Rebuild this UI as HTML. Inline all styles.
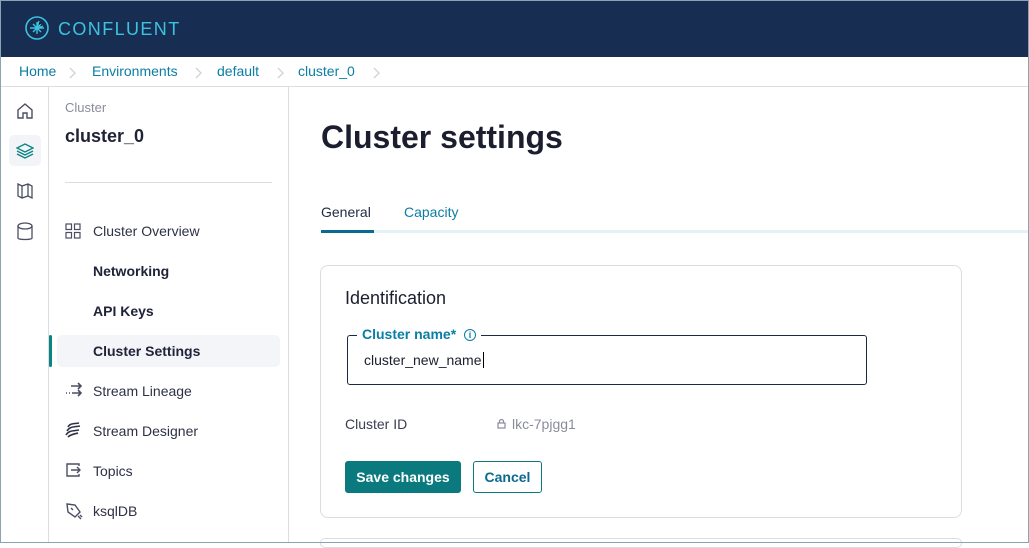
<!DOCTYPE html>
<html><head><style>
*{box-sizing:border-box;margin:0;padding:0}
body{width:1029px;height:543px;overflow:hidden;font-family:"Liberation Sans",sans-serif;background:#fff;position:relative;color:#1f2335}
.frame{position:absolute;inset:0;border:1px solid #8aa4b4;pointer-events:none;z-index:10}
.hdr{position:absolute;left:0;top:0;width:1029px;height:57px;background:#172d52}
.logo{position:absolute;left:25px;top:16px}
.logotxt{position:absolute;left:58px;top:19px;color:#3cc3e0;font-size:18px;letter-spacing:1.4px}
.bc{position:absolute;left:0;top:57px;width:1029px;height:30px;border-bottom:1px solid #dcdde3;font-size:14px;color:#0a7ea4}
.bc span{position:absolute;top:6px}
.bc svg{position:absolute;top:10px}
.rail{position:absolute;left:0;top:87px;width:49px;height:456px;border-right:1px solid #dcdde3}
.side{position:absolute;left:49px;top:87px;width:240px;height:456px;border-right:1px solid #dcdde3}
.side .it{position:absolute;left:44px;font-size:14px;color:#2e3145}
.side .b{font-weight:bold;color:#20233a}
.ic{position:absolute;left:16px}
h1{position:absolute;left:321px;top:119px;font-size:32px;font-weight:bold;color:#1b1e2e}
.tab{position:absolute;top:204px;font-size:14px}
.card{position:absolute;left:320px;top:265px;width:642px;height:253px;border:1px solid #dcdde3;border-radius:8px}
</style></head><body>
<div class="hdr">
<svg class="logo" width="24" height="24" viewBox="0 0 24 24"><circle cx="12" cy="12" r="11" fill="none" stroke="#3cc3e0" stroke-width="1.6"/><g stroke="#3cc3e0" stroke-width="1.4"><path d="M5 12H19M12 6V18M8 8L16 16M8 16L16 8M14 5L12 12L18 10"/></g></svg>
<div class="logotxt">CONFLUENT</div>
</div>
<div class="bc">
<span style="left:19px">Home</span><svg style="left:68px" width="8" height="12" viewBox="0 0 8 12"><path d="M2 1L7 6L2 11" fill="none" stroke="#d0d2d8" stroke-width="1.3"/></svg>
<span style="left:92px">Environments</span><svg style="left:194px" width="8" height="12" viewBox="0 0 8 12"><path d="M2 1L7 6L2 11" fill="none" stroke="#d0d2d8" stroke-width="1.3"/></svg>
<span style="left:217px">default</span><svg style="left:276px" width="8" height="12" viewBox="0 0 8 12"><path d="M2 1L7 6L2 11" fill="none" stroke="#d0d2d8" stroke-width="1.3"/></svg>
<span style="left:298px">cluster_0</span><svg style="left:372px" width="8" height="12" viewBox="0 0 8 12"><path d="M2 1L7 6L2 11" fill="none" stroke="#d0d2d8" stroke-width="1.3"/></svg>
</div>
<div class="rail">
<svg style="position:absolute;left:16px;top:15px" width="18" height="18" viewBox="0 0 18 18" fill="none" stroke="#4b4e63" stroke-width="1.4"><path d="M2 8L9 2L16 8V16H11V11H7V16H2Z"/></svg>
<div style="position:absolute;left:9px;top:48px;width:32px;height:31px;background:#f3f4f7;border-radius:5px"></div>
<svg style="position:absolute;left:16px;top:55px" width="18" height="18" viewBox="0 0 18 18" fill="none" stroke="#0b8484" stroke-width="1.3"><path d="M9 2L17 6L9 10L1 6Z M1 9L9 13L17 9 M1 12L9 16L17 12"/></svg>
<svg style="position:absolute;left:17px;top:96px" width="16" height="16" viewBox="0 0 16 16" fill="none" stroke="#4b4e63" stroke-width="1.3"><path d="M1 1L5 3L11 1L15 3V15L11 13L5 15L1 13Z M5 3V15 M11 1V13"/></svg>
<svg style="position:absolute;left:17px;top:135px" width="16" height="20" viewBox="0 0 16 20" fill="none" stroke="#4b4e63" stroke-width="1.3"><ellipse cx="8" cy="4" rx="7" ry="3"/><path d="M1 4V16C1 18 15 18 15 16V4"/></svg>
</div>
<div class="side">
<div style="position:absolute;left:16px;top:13px;font-size:13px;color:#8a8c9c">Cluster</div>
<div style="position:absolute;left:16px;top:39px;font-size:18px;font-weight:bold;color:#1f2335">cluster_0</div>
<div style="position:absolute;left:16px;top:95px;width:207px;border-top:1px solid #dcdde3"></div>
<svg class="ic" style="top:136px" width="16" height="16" viewBox="0 0 16 16" fill="none" stroke="#4b4e63" stroke-width="1.2"><rect x="1" y="1" width="5.5" height="5.5"/><rect x="9.5" y="1" width="5.5" height="5.5"/><rect x="1" y="9.5" width="5.5" height="5.5"/><rect x="9.5" y="9.5" width="5.5" height="5.5"/></svg>
<div class="it" style="top:136px">Cluster Overview</div>
<div class="it b" style="top:176px">Networking</div>
<div class="it b" style="top:216px">API Keys</div>
<div style="position:absolute;left:0;top:248px;width:3px;height:32px;background:#0b8484;border-radius:2px"></div>
<div style="position:absolute;left:8px;top:248px;width:223px;height:32px;background:#f4f5f8;border-radius:5px"></div>
<div class="it b" style="top:256px">Cluster Settings</div>
<svg class="ic" style="top:295px" width="18" height="16" viewBox="0 0 18 16" fill="none" stroke="#4b4e63" stroke-width="1.6"><path d="M6 4H16M13 1L16 4L13 7M1 11H2M4 11H5M7 11H16M13 8L16 11L13 14"/></svg>
<div class="it" style="top:296px">Stream Lineage</div>
<svg class="ic" style="top:335px" width="16" height="16" viewBox="0 0 16 16" fill="none" stroke="#2e3145" stroke-width="1.6"><path d="M3 5C5 1 9 2 14 1M2 9C5 4 10 5 15 4M1 13C4 8 9 9 14 8M3 15C6 12 10 12 13 11"/></svg>
<div class="it" style="top:336px">Stream Designer</div>
<svg class="ic" style="top:375px" width="16" height="16" viewBox="0 0 16 16" fill="none" stroke="#4b4e63" stroke-width="1.4"><path d="M14 4V2H2V14H14V12M6 8H15M12 5L15 8L12 11"/></svg>
<div class="it" style="top:376px">Topics</div>
<svg class="ic" style="top:415px" width="18" height="18" viewBox="0 0 18 18" fill="none" stroke="#4b4e63" stroke-width="1.4"><path d="M2 2L10 3L15 10L10 15L3 10Z M6 6L8 8 M13 14L16 17 M15 13L17 15"/></svg>
<div class="it" style="top:416px">ksqlDB</div>
</div>
<h1>Cluster settings</h1>
<div class="tab" style="left:321px;color:#1f2a44">General</div>
<div class="tab" style="left:404px;color:#0a7ea4">Capacity</div>
<div style="position:absolute;left:321px;top:230px;width:708px;height:3px;background:#e4f2f7"></div>
<div style="position:absolute;left:321px;top:230px;width:53px;height:3px;background:#0a6a8f"></div>
<div class="card">
<div style="position:absolute;left:24px;top:22px;font-size:18px;color:#1b1e2e">Identification</div>
<div style="position:absolute;left:26px;top:69px;width:520px;height:50px;border:1.3px solid #1b2a44;border-radius:3px"></div>
<div style="position:absolute;left:36px;top:60px;background:#fff;padding:0 5px;font-size:14px;color:#0a7ea4;font-weight:bold">Cluster name* <span style="display:inline-block;width:12px;height:12px;border:1px solid #0a7ea4;border-radius:50%;font-size:9px;text-align:center;line-height:10px;margin-left:4px;vertical-align:1px">i</span></div>
<div style="position:absolute;left:43px;top:86px;font-size:14px;color:#1b1e2e">cluster_new_name<span style="border-left:1px solid #000;margin-left:1px"></span></div>
<div style="position:absolute;left:24px;top:150px;font-size:14px;color:#3a3d50">Cluster ID</div>
<svg style="position:absolute;left:176px;top:152px" width="9" height="11" viewBox="0 0 9 11" fill="none" stroke="#8a8c9c" stroke-width="1.2"><rect x="1" y="5" width="7" height="5"/><path d="M2.5 5V3.5A2 2 0 0 1 6.5 3.5V5"/></svg>
<div style="position:absolute;left:191px;top:150px;font-size:14px;color:#8a8c9c">lkc-7pjgg1</div>
<div style="position:absolute;left:24px;top:195px;width:116px;height:32px;background:#0b7a7e;border-radius:3px;color:#fff;font-size:14px;font-weight:bold;text-align:center;line-height:32px">Save changes</div>
<div style="position:absolute;left:152px;top:195px;width:69px;height:32px;border:1px solid #0b7a7e;border-radius:3px;color:#0a6a8f;font-size:14px;font-weight:bold;text-align:center;line-height:30px">Cancel</div>
</div>
<div style="position:absolute;left:320px;top:538px;width:642px;height:10px;border:1px solid #dcdde3;border-radius:8px"></div>
<div class="frame"></div>
</body></html>
